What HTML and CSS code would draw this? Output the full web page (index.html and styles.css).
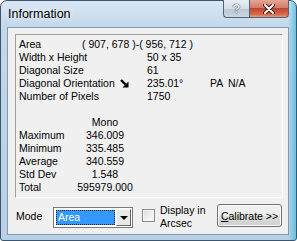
FILE: index.html
```html
<!DOCTYPE html>
<html lang="en">
<head>
  <meta charset="UTF-8">
  <title>Information</title>
  <link rel="stylesheet" href="styles.css">
</head>
<body>
  <div class="window">
    <div class="titlebar">
      <span class="title">Information</span>
      <div class="caption-btns">
        <div class="cap-btn help">?</div>
        <div class="cap-btn close">
          <svg width="12" height="10" viewBox="0 0 12 10">
            <path d="M2 1 L10 9 M10 1 L2 9" stroke="#4a1a14" stroke-width="4" stroke-linecap="round"/>
            <path d="M2 1 L10 9 M10 1 L2 9" stroke="#ffffff" stroke-width="2" stroke-linecap="round"/>
          </svg>
        </div>
      </div>
    </div>

    <div class="client">
      <!-- Информация об области -->
      <div class="panel">
        <div class="row"><span class="lbl lbl-short">Area</span><span>( 907, 678 )-( 956, 712 )</span></div>
        <div class="row"><span class="lbl">Width x Height</span><span>50 x 35</span></div>
        <div class="row"><span class="lbl">Diagonal Size</span><span>61</span></div>
        <div class="row">
          <span class="lbl">Diagonal Orientation<svg class="arrow" width="9" height="9" viewBox="0 0 9 9">
              <path d="M1 1 L5.5 5.5" stroke="#000" stroke-width="2.4"/>
              <path d="M8.5 2.5 L8.5 8.5 L2.5 8.5 Z" fill="#000"/>
            </svg></span>
          <span class="val">235.01°</span><span class="pa">PA</span><span>N/A</span>
        </div>
        <div class="row"><span class="lbl">Number of Pixels</span><span>1750</span></div>
        <div class="row"></div>

        <!-- Статистика -->
        <div class="row"><span class="stat-lbl"></span><span class="stat-val">Mono</span></div>
        <div class="row"><span class="stat-lbl">Maximum</span><span class="stat-val">346.009</span></div>
        <div class="row"><span class="stat-lbl">Minimum</span><span class="stat-val">335.485</span></div>
        <div class="row"><span class="stat-lbl">Average</span><span class="stat-val">340.559</span></div>
        <div class="row"><span class="stat-lbl">Std Dev</span><span class="stat-val">1.548</span></div>
        <div class="row"><span class="stat-lbl">Total</span><span class="stat-val">595979.000</span></div>
      </div>

      <div class="footer">
        <span class="mode-lbl">Mode</span>
        <div class="combo">
          <div class="combo-sel">Area</div>
          <div class="combo-btn"><span class="tri"></span></div>
        </div>
        <div class="checkbox"></div>
        <span class="check-lbl">Display in<br>Arcsec</span>
        <button class="calibrate"><u>C</u>alibrate &gt;&gt;</button>
      </div>
    </div>
  </div>
</body>
</html>
```

FILE: styles.css
```css
/* Окно в стиле Vista */
body {
  margin: 0;
  background: #ffffff;
  font-family: 'Liberation Sans', Arial, sans-serif;
  font-size: 10.5px;
  color: #000;
}

.window {
  width: 297px;
  height: 241px;
  box-sizing: border-box;
  border: 1px solid #3d5670;
  border-radius: 7px 7px 3px 3px;
  padding: 0 7px 5px 6px;
  display: flex;
  flex-direction: column;
  background:
    linear-gradient(to left, rgba(70, 190, 225, 0.75) 0, rgba(70, 190, 225, 0.5) 3px, rgba(70, 190, 225, 0) 8px),
    linear-gradient(to bottom, #dae6f3 0, #c4d7eb 26px, #b9cfe5 100%);
}

.titlebar {
  height: 26px;
  display: flex;
  align-items: flex-start;
}

.title {
  font-size: 12.5px;
  line-height: 27px;
  padding-left: 1px;
  text-shadow: 0 0 6px #ffffff;
}

.caption-btns {
  margin-left: auto;
  display: flex;
  margin-top: -1px;
}

.cap-btn {
  height: 18px;
  box-sizing: border-box;
  border: 1px solid #52627a;
  border-top: none;
  display: flex;
  align-items: center;
  justify-content: center;
}

.help {
  width: 26px;
  border-right: none;
  border-radius: 0 0 0 4px;
  background: linear-gradient(to bottom, #e8eef5 0, #d3dde8 50%, #b9c7d6 51%, #c9d6e3 100%);
  color: #eef3f8;
  font-weight: bold;
  font-size: 13px;
  text-shadow: 0 0 1px #2f4258, 0 0 1px #2f4258;
}

.close {
  width: 40px;
  border-radius: 0 0 4px 0;
  background: linear-gradient(to bottom, #e6a596 0, #d27b6a 45%, #c04530 50%, #d56a4f 85%, #e8a070 100%);
}

.client {
  flex: 1;
  border: 1px solid #8399ae;
  background: #f0f0f0;
  display: flex;
  flex-direction: column;
}

/* Панель с данными */
.panel {
  margin: 6px 5px 0 7px;
  height: 164px;
  box-sizing: border-box;
  border: 1px solid;
  border-color: #a0a0a0 #ffffff #ffffff #a0a0a0;
  padding: 3px 0 0 3px;
}

.row {
  display: flex;
  height: 13px;
  line-height: 13px;
  white-space: nowrap;
}

.lbl {
  width: 128px;
  flex-shrink: 0;
}

.lbl-short {
  width: 63px;
}

.arrow {
  vertical-align: -1px;
  margin-left: 5px;
}

.val {
  width: 63px;
}

.pa {
  width: 18px;
}

.stat-lbl {
  width: 57px;
}

.stat-val {
  width: 58px;
  text-align: center;
}

/* Нижняя панель */
.footer {
  flex: 1;
  display: flex;
  align-items: flex-start;
  padding: 0 6px 0 8px;
}

.mode-lbl {
  width: 37px;
  margin-top: 12px;
  line-height: 13px;
}

.combo {
  width: 80px;
  height: 21px;
  margin-top: 9px;
  box-sizing: border-box;
  border: 1px solid #7a7a7a;
  background: #ffffff;
  display: flex;
  align-items: center;
  padding: 0 1px 0 2px;
}

.combo-sel {
  width: 61px;
  height: 15px;
  box-sizing: border-box;
  border: 1px dotted #222;
  background: #3399ff;
  color: #ffffff;
  line-height: 13px;
  padding-left: 1px;
}

.combo-btn {
  margin-left: 1px;
  width: 15px;
  height: 17px;
  box-sizing: border-box;
  border: 1px solid;
  border-color: #f8f8f8 #646464 #646464 #f8f8f8;
  background: #e8e8e8;
  display: flex;
  align-items: center;
  justify-content: center;
}

.tri {
  width: 0;
  height: 0;
  border-left: 4px solid transparent;
  border-right: 4px solid transparent;
  border-top: 4px solid #000;
  margin-top: 1px;
}

.checkbox {
  width: 13px;
  height: 13px;
  box-sizing: border-box;
  margin: 11px 0 0 9px;
  border: 1px solid #8e8f8f;
  background: linear-gradient(to bottom right, #dcdcdc, #ffffff);
  box-shadow: inset 0 0 0 1px #f4f4f4;
}

.check-lbl {
  margin: 6px 0 0 5px;
  line-height: 13px;
}

.calibrate {
  margin: 6px 0 0 auto;
  width: 65px;
  height: 23px;
  border: 1px solid #707070;
  border-radius: 3px;
  background: linear-gradient(to bottom, #f2f2f2 0, #ebebeb 50%, #dddddd 51%, #cfcfcf 100%);
  box-shadow: inset 0 0 0 1px #fbfbfb;
  font-family: 'Liberation Sans', Arial, sans-serif;
  font-size: 10.5px;
  color: #000;
  padding: 0;
}
```
